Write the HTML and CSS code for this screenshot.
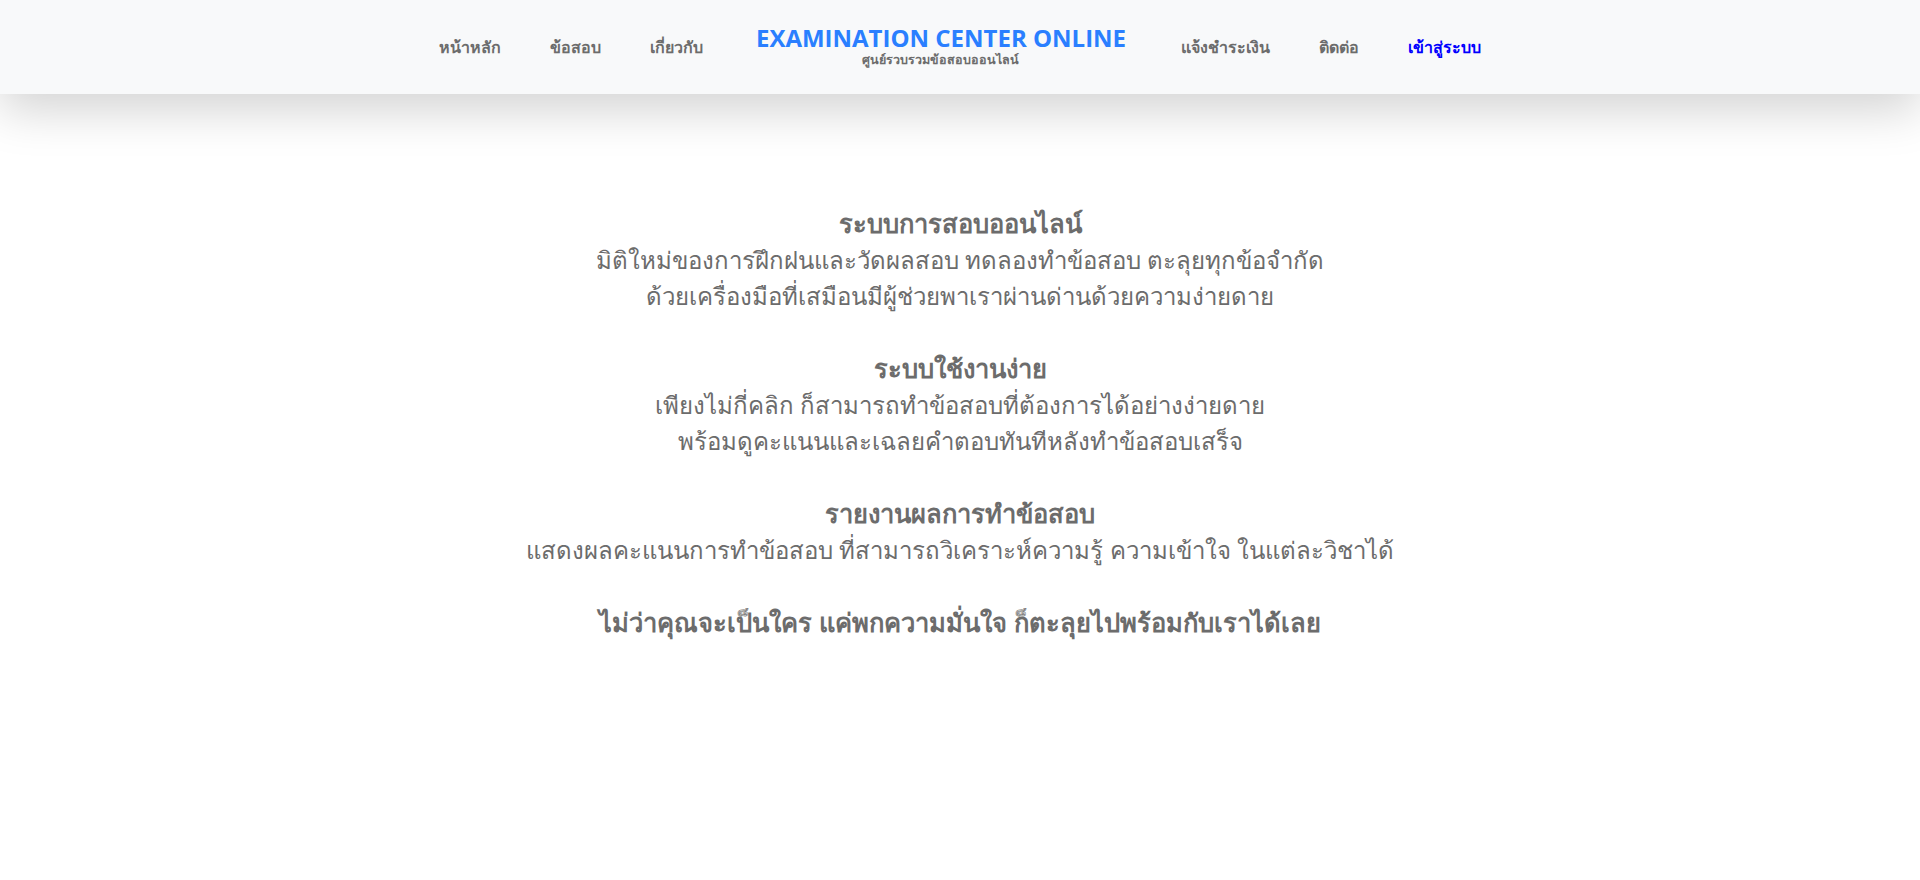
FILE: index.html
```html
<!DOCTYPE html>
<html lang="th">
<head>
<meta charset="utf-8">
<title>Examination Center Online</title>
<link rel="stylesheet" href="styles.css">
</head>
<body>
<header class="topbar">
  <nav class="nav">
    <a class="nav-link" href="#">หน้าหลัก</a>
    <a class="nav-link" href="#">ข้อสอบ</a>
    <a class="nav-link" href="#">เกี่ยวกับ</a>
    <a class="brand" href="#">
      <span class="brand-title">EXAMINATION CENTER ONLINE</span>
      <span class="brand-sub">ศูนย์รวบรวมข้อสอบออนไลน์</span>
    </a>
    <a class="nav-link" href="#">แจ้งชำระเงิน</a>
    <a class="nav-link" href="#">ติดต่อ</a>
    <a class="nav-link login" href="#">เข้าสู่ระบบ</a>
  </nav>
</header>
<main class="content">
  <p class="block"><strong>ระบบการสอบออนไลน์</strong><br>มิติใหม่ของการฝึกฝนและวัดผลสอบ ทดลองทำข้อสอบ ตะลุยทุกข้อจำกัด<br>ด้วยเครื่องมือที่เสมือนมีผู้ช่วยพาเราผ่านด่านด้วยความง่ายดาย</p>
  <p class="block"><strong>ระบบใช้งานง่าย</strong><br>เพียงไม่กี่คลิก ก็สามารถทำข้อสอบที่ต้องการได้อย่างง่ายดาย<br>พร้อมดูคะแนนและเฉลยคำตอบทันทีหลังทำข้อสอบเสร็จ</p>
  <p class="block"><strong>รายงานผลการทำข้อสอบ</strong><br>แสดงผลคะแนนการทำข้อสอบ ที่สามารถวิเคราะห์ความรู้ ความเข้าใจ ในแต่ละวิชาได้</p>
  <p class="block"><strong>ไม่ว่าคุณจะเป็นใคร แค่พกความมั่นใจ ก็ตะลุยไปพร้อมกับเราได้เลย</strong></p>
</main>
</body>
</html>
```
FILE: styles.css
```css
* { box-sizing: border-box; }
html, body { margin: 0; padding: 0; background: #ffffff; }
body { font-family: "Open Sans", sans-serif; color: #6c6c6c; }
.topbar {
  background: #f8f9fa;
  height: 94px;
  box-shadow: 0 1rem 3rem rgba(0,0,0,.175);
  display: flex;
  align-items: center;
  justify-content: center;
}
.nav { display: flex; align-items: center; gap: 49px; }
.nav-link {
  color: #6c6c6c;
  text-decoration: none;
  font-weight: 700;
  font-size: 16px;
  margin-top: 1px;
}
.nav-link.login { color: #0000ff; }
.brand {
  display: flex;
  flex-direction: column;
  align-items: center;
  gap: 2px;
  text-decoration: none;
  margin: 0 6px 0 4px;
}
.brand-title { color: #2a7fff; font-weight: 700; font-size: 24px; line-height: 24px; }
.brand-sub { color: #6c6c6c; font-weight: 700; font-size: 12.5px; line-height: 16px; }
.content { padding-top: 111px; text-align: center; }
.block { margin: 0 0 36px; font-size: 24px; line-height: 36px; }
.block strong { font-weight: 700; font-size: 25.5px; }
```
